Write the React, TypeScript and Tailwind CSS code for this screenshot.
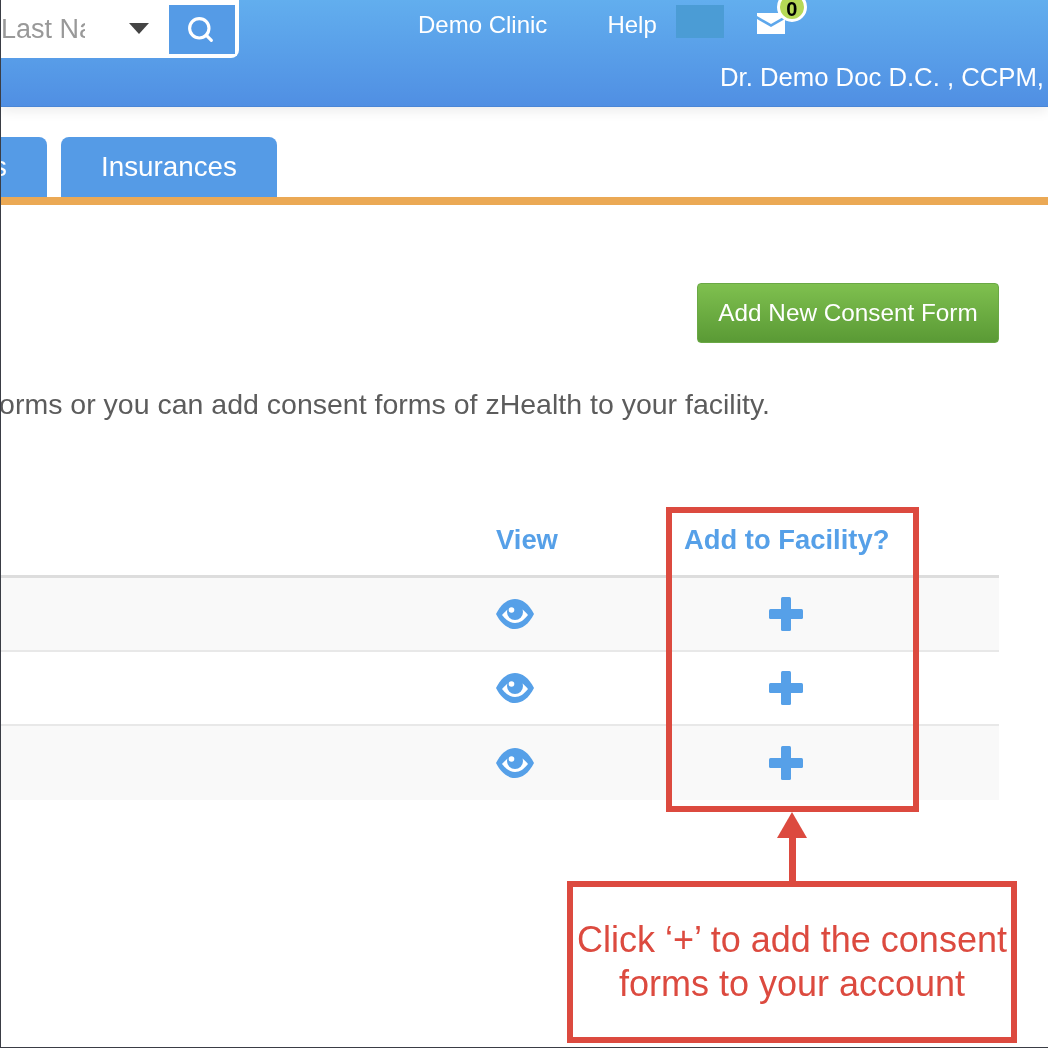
import { Search } from "lucide-react";

const rows = ["bg-[#f9f9f9]", "bg-white", "bg-[#f9f9f9]"];

function EyeIcon() {
  return (
    <svg width="38" height="30" viewBox="0 0 38 30">
      <path
        d="M0 15C5 5 12 0 19 0s14 5 19 15c-5 10-12 15-19 15S5 25 0 15z"
        fill="#56a0e8"
      />
      <path d="M6 16c4-5 8-8 13-8s9 3 13 8c-4 5-8 8-13 8s-9-3-13-8z" fill="#fff" />
      <circle cx="19" cy="13" r="8" fill="#56a0e8" />
      <circle cx="15.5" cy="11" r="2.8" fill="#fff" />
    </svg>
  );
}

function PlusIcon() {
  return (
    <svg width="34" height="34" viewBox="0 0 34 34" fill="#56a0e8">
      <rect x="12" y="0" width="10" height="34" rx="1.5" />
      <rect x="0" y="12" width="34" height="10" rx="1.5" />
    </svg>
  );
}

function MailIcon() {
  return (
    <svg width="28" height="21" viewBox="0 0 28 21" fill="#fff">
      <path d="M0 0h28v3L14 11 0 3z" />
      <path d="M0 6l14 8 14-8v15H0z" />
    </svg>
  );
}

export default function App() {
  return (
    <div className="relative w-[1048px] h-[1048px] overflow-hidden bg-white font-['Liberation_Sans',Arial,sans-serif] border-l border-l-[#3a3d45] border-b border-b-[#3a3d45] blur-[0.6px]">
      {/* top bar */}
      <header className="flex h-[107px] bg-gradient-to-b from-[#62aeee] to-[#508fe3] shadow-[0_4px_12px_rgba(0,0,0,0.08)] border-b border-b-[#4a86d6]">
        <div className="flex w-[238px] h-[59px] bg-white rounded-br-lg border-r-[4px] border-b-[4px] border-white -mt-px">
          <div className="w-[107px] pt-[14px] text-[27px] leading-[32px] text-[#999] overflow-hidden whitespace-nowrap bg-white">
            <div className="w-[84px] overflow-hidden">Last Name</div>
          </div>
          <div className="w-[61px] flex items-center justify-center pt-[4px]">
            <div className="w-0 h-0 border-l-[10px] border-r-[10px] border-t-[11px] border-l-transparent border-r-transparent border-t-[#444]" />
          </div>
          <div className="flex-1 mt-[6px] pr-[3px] bg-[#559be6] flex items-center justify-center">
            <Search size={29} color="#fff" strokeWidth={2.6} />
          </div>
        </div>
        <div className="flex-1 relative">
          <div className="flex items-start pl-[179px] pt-[10px] text-white text-[24px] leading-[30px]">
            <span>Demo Clinic</span>
            <span className="ml-[60px]">Help</span>
            <div className="ml-[19px] -mt-[5px] w-[48px] h-[33px] bg-[#4b9cd5]" />
            <div className="relative ml-[33px] mt-[3px]">
              <MailIcon />
              <div className="absolute -top-[21px] left-[20px] w-[30px] h-[30px] rounded-full bg-[#b6d957] border-[3px] border-white text-black font-bold text-[20px] leading-[28px] text-center">
                0
              </div>
            </div>
          </div>
          <div className="mt-[22px] ml-[481px] text-white text-[25.7px] leading-[30px] whitespace-nowrap">
            Dr. Demo Doc D.C. , CCPM,
          </div>
        </div>
      </header>

      {/* tabs */}
      <div className="flex gap-[14px] mt-[30px] h-[60px] text-white text-[27.8px]">
        <div className="w-[46px] flex items-center justify-end pr-[40px] rounded-tr-lg bg-[#559be6]">
          s
        </div>
        <div className="w-[216px] flex items-center justify-center rounded-t-lg bg-[#559be6]">
          Insurances
        </div>
      </div>
      <div className="h-[8px] bg-[#eba955]" />

      {/* content */}
      <div className="flex justify-end pr-[49px] mt-[78px]">
        <button className="w-[302px] h-[60px] rounded-[4px] bg-gradient-to-b from-[#7fc04f] to-[#5a9a35] border border-[#6aa845] text-white text-[24.3px] text-center">
          Add New Consent Form
        </button>
      </div>
      <div className="flex justify-end mt-[43px] pr-[278px] text-[28.5px] leading-[36px] text-[#5c5c5c] whitespace-nowrap overflow-hidden">
        You can use your own consent forms or you can add consent forms of zHealth to your facility.
      </div>

      <div className="w-[998px] mt-[79px]">
        <div className="grid grid-cols-[495px_188px_205px_110px] h-[77px] pt-[18px] border-b-[3px] border-b-[#dddddd] text-[#56a0e8] text-[27.4px] font-bold">
          <div />
          <div>View</div>
          <div className="whitespace-nowrap">Add to Facility?</div>
          <div />
        </div>
        {rows.map((bg, i) => (
          <div
            key={i}
            className={`grid grid-cols-[495px_188px_205px_110px] items-center h-[74px] ${bg} ${
              i < 2 ? "border-b-2 border-b-[#e8e8e8]" : ""
            }`}
          >
            <div />
            <EyeIcon />
            <div className="flex justify-center pr-[2px]">
              <PlusIcon />
            </div>
            <div />
          </div>
        ))}
      </div>

      {/* annotation */}
      <div className="absolute left-[665px] top-[507px] w-[253px] h-[305px] border-[6px] border-[#dc4a3f]" />
      <div className="absolute left-[776px] top-[812px] w-0 h-0 border-l-[15px] border-r-[15px] border-b-[26px] border-l-transparent border-r-transparent border-b-[#dc4a3f]" />
      <div className="absolute left-[788px] top-[836px] w-[7px] h-[48px] bg-[#dc4a3f]" />
      <div className="absolute left-[566px] top-[881px] w-[450px] h-[162px] border-[6px] border-[#dc4a3f] flex items-center justify-center text-center text-[#dc4a3f] text-[36px] leading-[44px]">
        <div>
          Click ‘+’ to add the consent
          <br />
          forms to your account
        </div>
      </div>
    </div>
  );
}
